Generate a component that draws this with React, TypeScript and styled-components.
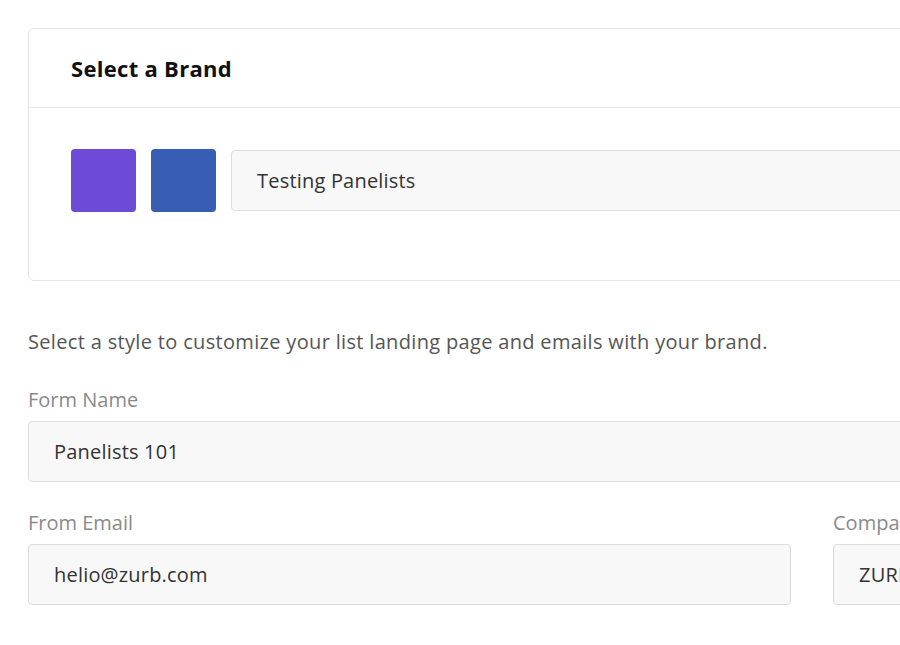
import styled, { createGlobalStyle } from "styled-components";

const GlobalStyle = createGlobalStyle`
  html, body {
    margin: 0;
    padding: 0;
    background: #ffffff;
    overflow: hidden;
  }
  body {
    font-family: "Open Sans", Lato, Arial, sans-serif;
    color: #333;
  }
`;

const brands = [{ color: "#6d4ad7" }, { color: "#385db5" }];

const App: React.FC = () => {
  return (
    <>
      <GlobalStyle />
      <StyledPage>
        <StyledCard>
          <StyledCardHeader>
            <h2>Select a Brand</h2>
          </StyledCardHeader>
          <StyledCardBody>
            {brands.map((brand) => (
              <StyledSwatch key={brand.color} color={brand.color} />
            ))}
            <StyledInput defaultValue="Testing Panelists" readOnly />
          </StyledCardBody>
        </StyledCard>

        <StyledIntro>
          Select a style to customize your list landing page and emails with your brand.
        </StyledIntro>

        <StyledField gap="34px">
          <StyledLabel>Form Name</StyledLabel>
          <StyledInput defaultValue="Panelists 101" readOnly />
        </StyledField>

        <StyledRow>
          <StyledField width="763px">
            <StyledLabel>From Email</StyledLabel>
            <StyledInput defaultValue="helio@zurb.com" readOnly />
          </StyledField>
          <StyledField width="300px">
            <StyledLabel>Company</StyledLabel>
            <StyledInput defaultValue="ZURB" readOnly />
          </StyledField>
        </StyledRow>
      </StyledPage>
    </>
  );
};

const StyledPage = styled.main`
  width: 1100px;
  padding: 28px 0 0 28px;
  display: flex;
  flex-direction: column;
`;

const StyledCard = styled.section`
  border: 1px solid #e4e4e4;
  border-radius: 6px;
  background: #fff;
`;

const StyledCardHeader = styled.div`
  height: 78px;
  display: flex;
  align-items: center;
  padding-left: 42px;
  border-bottom: 1px solid #e6e6e6;
  > h2 {
    margin: 0;
    font-size: 22px;
    line-height: 26px;
    letter-spacing: 0.3px;
    font-weight: 700;
    color: #111;
  }
`;

const StyledCardBody = styled.div`
  display: flex;
  align-items: center;
  gap: 15px;
  padding: 41px 0 68px 42px;
`;

const StyledSwatch = styled.div<{ color: string }>`
  width: 65px;
  height: 63px;
  flex-shrink: 0;
  border-radius: 4px;
  background: ${(p) => p.color};
`;

const StyledInput = styled.input`
  box-sizing: border-box;
  width: 100%;
  height: 61px;
  padding: 0 25px;
  border: 1px solid #dcdcdc;
  border-radius: 4px;
  background: #f8f8f8;
  font-family: "Open Sans", Lato, Arial, sans-serif;
  font-size: 20px;
  letter-spacing: 0.2px;
  color: #333;
  outline: none;
`;

const StyledIntro = styled.p`
  margin: 49px 0 0;
  font-size: 20px;
  line-height: 24px;
  letter-spacing: 0.33px;
  color: #555;
`;

const StyledField = styled.div<{ width?: string; gap?: string }>`
  display: flex;
  flex-direction: column;
  width: ${(p) => p.width || "auto"};
  flex-shrink: 0;
  margin-top: ${(p) => p.gap || "29px"};
`;

const StyledLabel = styled.label`
  font-size: 20px;
  line-height: 24px;
  color: #8a8a8a;
  margin-bottom: 9px;
`;

const StyledRow = styled.div`
  display: flex;
  gap: 42px;
`;

export default App;
